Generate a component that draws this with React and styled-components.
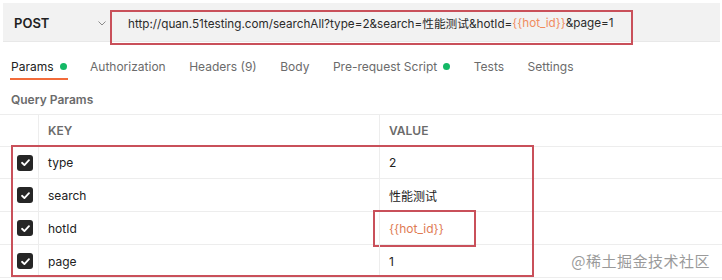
import React from "react";
import styled, { createGlobalStyle } from "styled-components";

const Global = createGlobalStyle`
  html, body { margin: 0; padding: 0; background: #fff; }
  body { font-family: Inter, "Noto Sans", "Noto Sans CJK SC", sans-serif; color: #212121; }
`;

const Page = styled.div`
  width: 722px;
  height: 280px;
  overflow: hidden;
  position: relative;
  background: #fff;
`;

const RequestBar = styled.div`
  margin: 3px 2px 0 3px;
  height: 39px;
  background: #f2f2f2;
  border-bottom: 1px solid #e8e8e8;
  display: flex;
  align-items: flex-start;
  box-sizing: border-box;
`;

const Method = styled.div`
  width: 107px;
  height: 39px;
  box-sizing: border-box;
  padding: 0 0 0 11px;
  display: flex;
  align-items: center;
  justify-content: space-between;
  font-size: 13px;
  font-weight: 600;
  color: #212121;
`;

const Chevron = styled.svg`
  width: 10px;
  height: 10px;
  margin-right: 3px;
`;

const UrlField = styled.div`
  margin-top: 7px;
  width: 523px;
  height: 35px;
  box-sizing: border-box;
  border: 2px solid #c9505a;
  display: flex;
  align-items: center;
  padding-left: 16px;
  padding-bottom: 10px;
  font-size: 11.7px;
  color: #2b2b2b;
  white-space: nowrap;
`;

const Var = styled.span`
  color: #f08c5e;
`;

const Tabs = styled.div`
  display: flex;
  gap: 23.5px;
  padding-left: 11px;
  margin-top: 12px;
  height: 26px;
`;

const Tab = styled.div`
  position: relative;
  display: flex;
  align-items: center;
  gap: 6px;
  height: 24px;
  font-size: 12px;
  color: ${(p) => (p.$active ? "#212121" : "#6b6b6b")};
  ${(p) =>
    p.$active &&
    `&::after { content: ""; position: absolute; left: -1px; right: -1px; bottom: -2px; height: 2px; background: #f26b3a; }`}
`;

const Dot = styled.span`
  width: 7px;
  height: 7px;
  border-radius: 50%;
  background: #14b866;
`;

const SectionTitle = styled.div`
  padding-left: 11px;
  margin-top: 9px;
  height: 20px;
  font-size: 12px;
  font-weight: 600;
  color: #6b6b6b;
  display: flex;
  align-items: center;
`;

const Table = styled.div`
  margin-top: 5px;
  border-top: 1px solid #ededed;
  position: relative;
`;

const Row = styled.div`
  display: grid;
  grid-template-columns: 38px 341px 1fr;
  height: ${(p) => p.$h || 32}px;
  border-bottom: 1px solid #ededed;
  box-sizing: border-box;
`;

const CheckCell = styled.div`
  display: flex;
  align-items: center;
  justify-content: flex-end;
  padding-right: 5px;
`;

const Cell = styled.div`
  border-left: 1px solid #ededed;
  display: flex;
  align-items: center;
  padding-left: 9px;
  font-size: 12px;
  color: ${(p) => (p.$var ? "#e07b53" : "#212121")};
  position: relative;
`;

const HeadCell = styled(Cell)`
  font-weight: 600;
  color: #6b6b6b;
`;

const Box = styled.span`
  width: 16px;
  height: 16px;
  border-radius: 3px;
  background: #262626;
  display: flex;
  align-items: center;
  justify-content: center;
`;

const Highlight = styled.div`
  position: absolute;
  border: 2px solid #c9505a;
  box-sizing: border-box;
  pointer-events: none;
`;

const Watermark = styled.div`
  position: absolute;
  right: 12px;
  bottom: 9px;
  font-size: 15px;
  color: #9a9a9a;
  font-family: "Noto Sans CJK SC", sans-serif;
  letter-spacing: 0.5px;
`;

const Check = () => (
  <Box>
    <svg width="11" height="11" viewBox="0 0 12 12">
      <path d="M2.2 6.3 L4.8 8.8 L9.8 3.4" fill="none" stroke="#fff" strokeWidth="2" strokeLinecap="round" strokeLinejoin="round" />
    </svg>
  </Box>
);

const rows = [
  { k: "type", v: "2" },
  { k: "search", v: "性能测试" },
  { k: "hotId", v: "{{hot_id}}", isVar: true },
  { k: "page", v: "1" },
];

export default function App() {
  return (
    <Page>
      <Global />
      <RequestBar>
        <Method>
          POST
          <Chevron viewBox="0 0 10 10">
            <path d="M1.5 3.5 L5 7 L8.5 3.5" fill="none" stroke="#8a8a8a" strokeWidth="1" />
          </Chevron>
        </Method>
        <UrlField>
          http://quan.51testing.com/searchAll?type=2&amp;search=性能测试&amp;hotId=<Var>{"{{hot_id}}"}</Var>&amp;page=1
        </UrlField>
      </RequestBar>
      <Tabs>
        <Tab $active>
          Params <Dot />
        </Tab>
        <Tab>Authorization</Tab>
        <Tab>Headers (9)</Tab>
        <Tab>Body</Tab>
        <Tab>
          Pre-request Script <Dot />
        </Tab>
        <Tab>Tests</Tab>
        <Tab>Settings</Tab>
      </Tabs>
      <SectionTitle>Query Params</SectionTitle>
      <Table>
        <Row>
          <CheckCell />
          <HeadCell>KEY</HeadCell>
          <HeadCell>VALUE</HeadCell>
        </Row>
        {rows.map((r) => (
          <Row key={r.k} $h={r.k === "type" ? 32 : 33}>
            <CheckCell>
              <Check />
            </CheckCell>
            <Cell>{r.k}</Cell>
            <Cell $var={r.isVar}>
              {r.v}
              {r.isVar && <Highlight style={{ left: -7, top: -2, width: 103, height: 37 }} />}
            </Cell>
          </Row>
        ))}
        <Highlight style={{ left: 11, top: 30, width: 523, height: 132 }} />
      </Table>
      <Watermark>@稀土掘金技术社区</Watermark>
    </Page>
  );
}
